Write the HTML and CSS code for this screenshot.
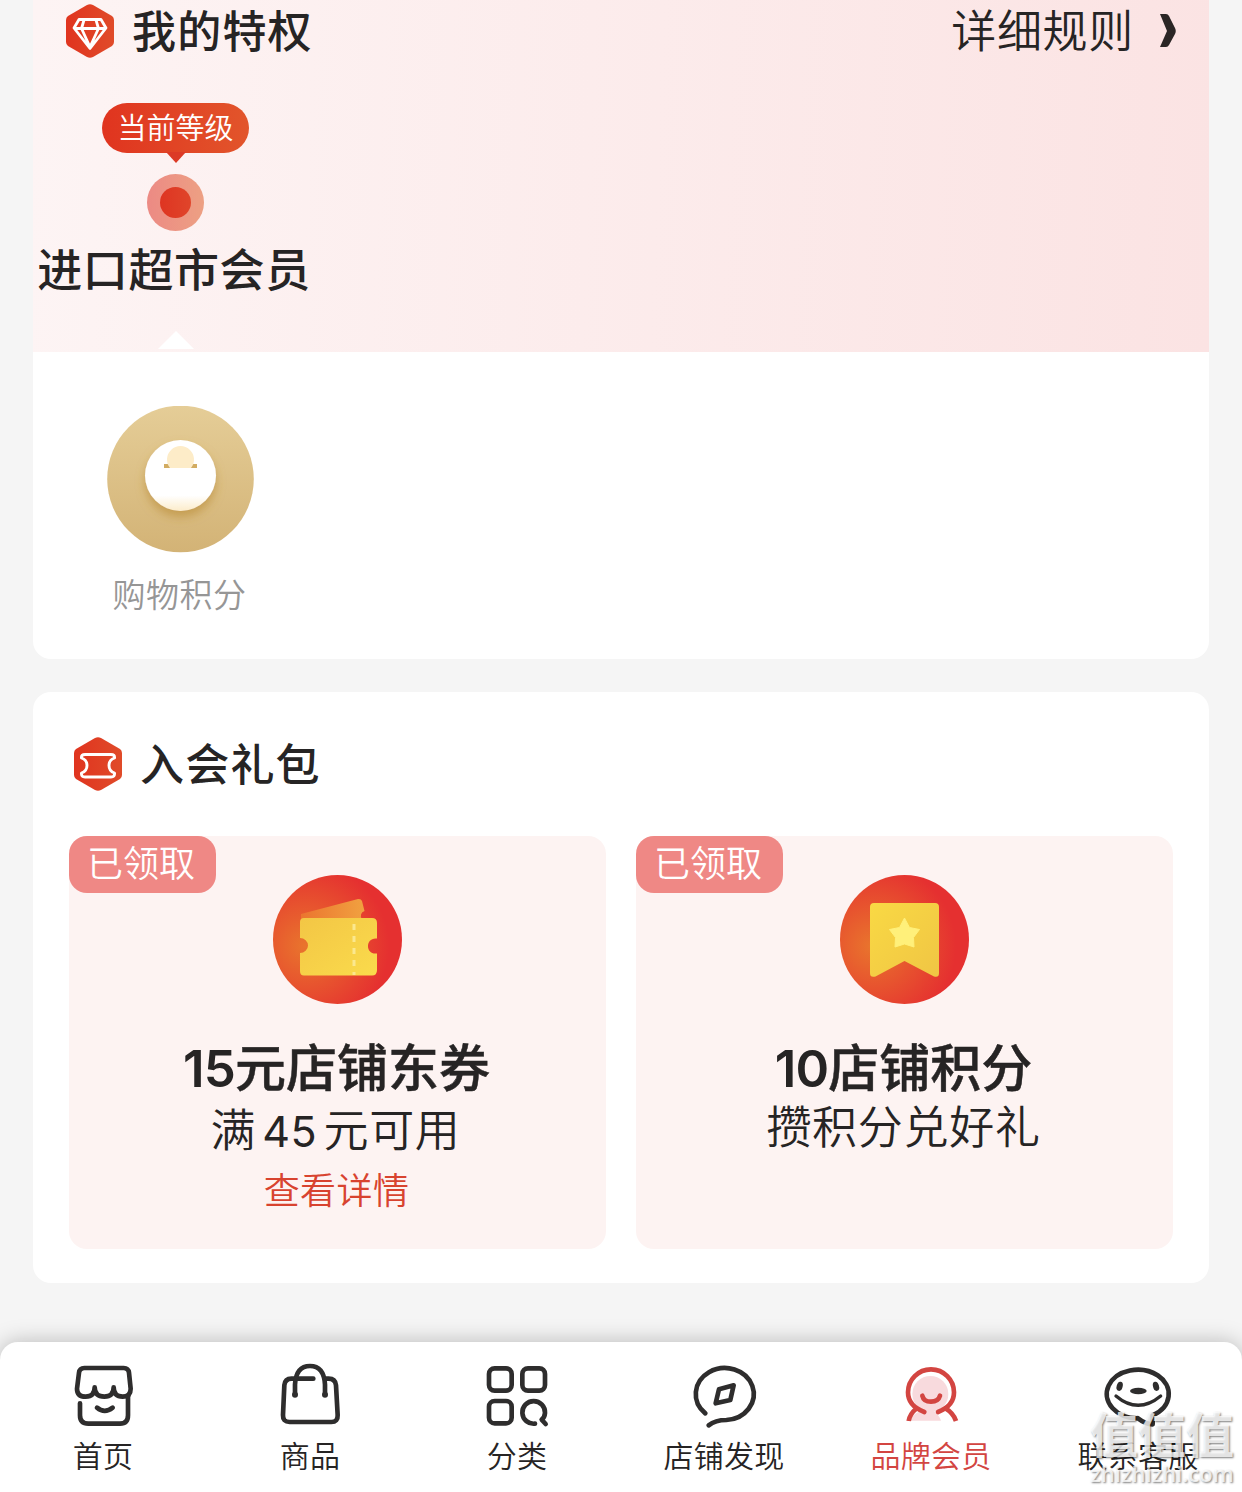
FILE: index.html
```html
<!DOCTYPE html>
<html lang="zh-CN">
<head>
    <meta charset="UTF-8">
    <meta name="viewport" content="width=device-width, initial-scale=1.0">
    <title>品牌会员</title>
    <link rel="stylesheet" href="styles.css">
</head>
<body>
    <main class="page">
        <section class="card privilege">
            <div class="privilege-top">
                <div class="title-row">
                    <svg class="hex" viewBox="0 0 48 54">
                        <defs>
                            <linearGradient id="hexFill" x1="0" x2="1">
                                <stop offset="0" stop-color="#e0341f"/>
                                <stop offset="1" stop-color="#e04b29"/>
                            </linearGradient>
                        </defs>
                        <path d="M21 1Q24-.6 27 1L46 12Q48 13.500 48 16V38Q48 40.500 46 42L27 53Q24 54.600 21 53L2 42Q0 40.500 0 38V16Q0 13.500 2 12Z" fill="url(#hexFill)"/>
                        <path d="M13 15.500H35L40 24 24 44.500 8 24ZM8 24.500H40M18 16 15.500 24.500 24 43 32.500 24.500 30 16" fill="none" stroke="#fff" stroke-width="2.800" stroke-linejoin="round"/>
                    </svg>
                    <h2>我的特权</h2>
                    <a class="rules">详细规则
                        <svg class="chevron" viewBox="0 0 16 34"><path d="M0 0H6Q8 0 9 2L15 14Q16.500 17 15 20L9 31Q8 33 6 33H0L7 17Z" fill="#2b2625"/></svg>
                    </a>
                </div>
                <div class="level">
                    <div class="level-tag">当前等级</div>
                    <div class="level-dot"></div>
                    <div class="level-name">进口超市会员</div>
                    <div class="level-arrow"></div>
                </div>
            </div>
            <div class="benefit">
                <svg class="benefit-icon" viewBox="0 0 147 147">
                    <defs>
                        <linearGradient id="gold" x1="0" x2="0" y1="0" y2="1">
                            <stop offset="0" stop-color="#e5cd97"/>
                            <stop offset="1" stop-color="#d3b376"/>
                        </linearGradient>
                        <linearGradient id="coin" x1="0" x2="0" y1="0" y2="1">
                            <stop offset=".78" stop-color="#fff"/>
                            <stop offset="1" stop-color="#fcecca"/>
                        </linearGradient>
                        <filter id="coinShadow" x="-30%" y="-30%" width="160%" height="170%">
                            <feDropShadow dx="0" dy="6" stdDeviation="5" flood-color="#b98a35" flood-opacity=".6"/>
                        </filter>
                    </defs>
                    <circle cx="73.500" cy="73" r="73.300" fill="url(#gold)"/>
                    <circle cx="73.500" cy="69.500" r="35.500" fill="url(#coin)" filter="url(#coinShadow)"/>
                    <path d="M57 58H63V62H57ZM84 58H90V62H84Z" fill="#d2ac62"/>
                    <path d="M63 62A13.500 13.500 0 1 1 84 62Z" fill="#fdecc8"/>
                </svg>
                <span>购物积分</span>
            </div>
        </section>

        <section class="card gifts">
            <div class="title-row">
                <svg class="hex" viewBox="0 0 48 54">
                    <path d="M21 1Q24-.6 27 1L46 12Q48 13.500 48 16V38Q48 40.500 46 42L27 53Q24 54.600 21 53L2 42Q0 40.500 0 38V16Q0 13.500 2 12Z" fill="url(#hexFill)"/>
                    <path d="M11 17.500H37Q41 17.500 40.500 21 35 23 35 28.500T40.500 36Q41 40 37 40H11Q7 40 7.500 36 13 34 13 28.500T7.500 21Q7 17.500 11 17.500Z" fill="none" stroke="#fff" stroke-width="2.900" stroke-linejoin="round"/>
                </svg>
                <h2>入会礼包</h2>
            </div>
            <div class="gift-list">
                <div class="gift">
                    <span class="got">已领取</span>
                    <svg class="gift-icon" viewBox="0 0 129 129">
                        <defs>
                            <radialGradient id="ball" cx=".25" cy=".55" r=".65">
                                <stop offset="0" stop-color="#e9752d"/>
                                <stop offset="1" stop-color="#e53030"/>
                            </radialGradient>
                            <linearGradient id="yellow" x1="0" x2="1" y1="0" y2="1">
                                <stop offset="0" stop-color="#f3c645"/>
                                <stop offset="1" stop-color="#fadb4c"/>
                            </linearGradient>
                            <linearGradient id="backTicket" x1="0" x2="1">
                                <stop offset="0" stop-color="#eb752f"/>
                                <stop offset="1" stop-color="#f1a140"/>
                            </linearGradient>
                            <linearGradient id="flag" x1="0" x2="1" y1="0" y2="1">
                                <stop offset="0" stop-color="#f9d944"/>
                                <stop offset="1" stop-color="#f0c544"/>
                            </linearGradient>
                        </defs>
                        <circle cx="64.500" cy="64.500" r="64.500" fill="url(#ball)"/>
                        <path d="M28 44V39L85 24Q88 23.500 89 26L91.500 36A5 5 0 0 0 89 44Z" fill="url(#backTicket)"/>
                        <path d="M31 43H99Q104 43 104 48V63.500C92 62 92 80 104 78.500V95Q104 100.500 99 100.500H31Q27 100.500 27 96V78A8 7.500 0 0 0 27 63V47Q27 43 31 43Z" fill="url(#yellow)"/>
                        <path d="M81 49V100" stroke="#fbe88e" stroke-width="3" stroke-dasharray="6 6" fill="none"/>
                    </svg>
                    <h3><span>15</span>元店铺东券</h3>
                    <p class="condition">满<span class="num">45</span>元可用</p>
                    <a class="detail">查看详情</a>
                </div>
                <div class="gift">
                    <span class="got">已领取</span>
                    <svg class="gift-icon" viewBox="0 0 129 129">
                        <circle cx="64.500" cy="64.500" r="64.500" fill="url(#ball)"/>
                        <path d="M34 28H95Q99 28 99 32V98Q99 103 94 101.500L64.500 86 35.500 101.500Q30 103 30 98V32Q30 28 34 28Z" fill="url(#flag)"/>
                        <path d="M64.500 43 69.500 52.500 79.500 54.500 73.500 62.500 74 72 64.500 69 55 72 55.500 62.500 49.500 54.500 59.500 52.500Z" fill="#fff07a" stroke="#fff07a" stroke-linejoin="round"/>
                    </svg>
                    <h3><span>10</span>店铺积分</h3>
                    <p>攒积分兑好礼</p>
                </div>
            </div>
        </section>
    </main>

    <nav class="tabbar">
        <a class="tab">
            <svg viewBox="0 0 216 216">
                <path d="M52 30H170Q184 30 186 44L191 92Q191 116 167 116Q140 116 140 88Q140 116 112 116Q83 116 83 88Q83 116 56 116Q30 116 30 92L36 44Q38 30 52 30Z"/>
                <path d="M39 136V172Q39 197 64 197H159Q183 197 183 172V114M90 149Q113 168 137 149"/>
            </svg>
            <span>首页</span>
        </a>
        <a class="tab">
            <svg viewBox="0 0 216 216">
                <path d="M118 62H52Q33 62 31 82L27 171Q26 192 47 192H172Q192 192 191 171L186 82Q184 62 164 62H156"/>
                <path d="M63 110V80Q66 24 108 24Q150 24 153 80V110"/>
                <circle class="fill" cx="63" cy="110" r="9"/>
                <circle class="fill" cx="153" cy="110" r="9"/>
            </svg>
            <span>商品</span>
        </a>
        <a class="tab">
            <svg viewBox="0 0 216 216">
                <rect x="24" y="31" width="68" height="67" rx="17"/>
                <rect x="124" y="31" width="68" height="67" rx="17"/>
                <rect x="24" y="129" width="68" height="67" rx="17"/>
                <path d="M162 197A34 34 0 1 1 192 165Q191 178 182 185L194 198"/>
            </svg>
            <span>分类</span>
        </a>
        <a class="tab">
            <svg viewBox="0 0 216 216">
                <path d="M52 166A87 78 0 1 1 115 186Q82 186 62 202"/>
                <path d="M93 94 137 82 127 126 83 136Z"/>
            </svg>
            <span>店铺发现</span>
        </a>
        <a class="tab active">
            <svg viewBox="0 0 216 216">
                <g class="tint">
                    <circle cx="106" cy="108" r="54"/>
                    <path d="M46 188Q52 166 84 156H112Q132 170 138 188Z"/>
                </g>
                <path d="M88 162Q39 144 39 103A69 69 0 0 1 177 103Q177 144 129 162M82 113Q86 131 108 131Q130 131 135 113"/>
                <path class="flat" d="M66 150Q44 168 41 189M150 150Q176 166 183 189"/>
            </svg>
            <span>品牌会员</span>
        </a>
        <a class="tab">
            <svg viewBox="0 0 216 216">
                <path d="M108 181A93 73 0 1 1 152 172V199Q130 198 108 181"/>
                <path class="thin" d="M42 114Q108 170 176 114"/>
                <ellipse class="fill" cx="53" cy="85" rx="9" ry="14" transform="rotate(15 53 85)"/>
                <ellipse class="fill" cx="162" cy="85" rx="9" ry="14" transform="rotate(-15 162 85)"/>
                <ellipse class="fill" cx="109" cy="99" rx="25" ry="10"/>
            </svg>
            <span>联系客服</span>
        </a>
        <div class="watermark">
            <b>值值值</b>
            <i>zhizhizhi.com</i>
        </div>
    </nav>
</body>
</html>
```
FILE: styles.css
```css
* {
    box-sizing: border-box;
}
body {
    margin: 0;
    height: 1492px;
    overflow: hidden;
    display: flex;
    flex-direction: column;
    background-color: #f5f5f5;
    color: #262424;
    font-family: "Noto Sans CJK SC", sans-serif;
}
h2, h3, p {
    margin: 0;
}
svg {
    display: block;
    flex: none;
}
.page {
    flex: 1;
    padding: 0 33px;
}
.card {
    background-color: #fff;
    border-radius: 18px;
}

/* privileges */
.privilege {
    height: 659px;
    border-top-left-radius: 0;
    border-top-right-radius: 0;
}
.privilege-top {
    height: 352px;
    margin-bottom: 54px;
    background: linear-gradient(92deg, #fdf4f4, #fbe3e3);
}
.title-row {
    display: flex;
    align-items: center;
    height: 54px;
}
.privilege .title-row {
    padding: 0 33px;
    height: 62px;
}
.hex {
    width: 48px;
    height: 54px;
}
h2 {
    margin-left: 18px;
    padding-bottom: 5px;
    font-size: 44px;
    font-weight: 500;
    line-height: 54px;
    letter-spacing: 1.2px;
}
.rules {
    display: flex;
    align-items: center;
    gap: 26px;
    margin: 0 0 4px auto;
    font-size: 45px;
    font-weight: 350;
    line-height: 56px;
    letter-spacing: 0.7px;
}
.chevron {
    width: 16px;
    height: 34px;
    margin-top: 4px;
}
.level {
    display: flex;
    flex-direction: column;
    align-items: center;
    width: 285px;
    padding-top: 41px;
}
.level-tag {
    position: relative;
    width: 147px;
    height: 50px;
    border-radius: 25px;
    background: linear-gradient(90deg, #e0341f, #e2552b);
    color: #fff;
    font-size: 29px;
    font-weight: 350;
    line-height: 47px;
    text-align: center;
}
.level-tag::after {
    content: "";
    position: absolute;
    left: 64px;
    top: 49px;
    border: 10px solid transparent;
    border-top: 11px solid #dc3a26;
    border-bottom: 0;
}
.level-dot {
    width: 57px;
    height: 57px;
    margin-top: 21px;
    border: 13px solid transparent;
    border-radius: 50%;
    background: linear-gradient(90deg, #de3522, #e0452a) padding-box, linear-gradient(90deg, #ec8a84, #eda083) border-box;
}
.level-name {
    margin: 10px 0 0 -3px;
    font-size: 45px;
    font-weight: 500;
    line-height: 54px;
    letter-spacing: 0.6px;
    white-space: nowrap;
}
.level-arrow {
    margin-top: 36px;
    border: 18px solid transparent;
    border-bottom-color: #fff;
    border-top: 0;
}
.benefit {
    display: flex;
    flex-direction: column;
    align-items: center;
    width: 147px;
    margin-left: 74px;
}
.benefit-icon {
    width: 147px;
    height: 147px;
}
.benefit span {
    margin: 20px 0 0 -2px;
    color: #969696;
    font-size: 33px;
    font-weight: 350;
    line-height: 40px;
    letter-spacing: 0.5px;
}

/* gift pack */
.gifts {
    height: 591px;
    margin-top: 33px;
    padding: 45px 36px 0;
}
.gifts .title-row {
    padding-left: 5px;
}
.gift-list {
    display: grid;
    grid-template-columns: 1fr 1fr;
    gap: 30px;
    margin-top: 45px;
}
.gift {
    position: relative;
    display: flex;
    flex-direction: column;
    align-items: center;
    height: 413px;
    padding-top: 39px;
    border-radius: 18px;
    background-color: #fdf3f2;
}
.got {
    position: absolute;
    left: 0;
    top: 0;
    width: 147px;
    height: 57px;
    padding-right: 3px;
    border-radius: 18px;
    background-color: #ef8885;
    color: #fff;
    font-size: 36px;
    font-weight: 350;
    line-height: 51px;
    text-align: center;
}
.gift-icon {
    width: 129px;
    height: 129px;
}
h3 {
    margin: 31px 0 0 -2px;
    font-size: 51px;
    font-weight: 500;
    line-height: 60px;
    -webkit-text-stroke: 0.5px #262424;
}
h3 span {
    font-family: Inter, sans-serif;
    font-weight: 600;
    letter-spacing: -0.8px;
    -webkit-text-stroke: 0;
}
.gift p {
    margin: -1px 0 0 -2px;
    font-size: 45px;
    font-weight: 350;
    line-height: 54px;
    letter-spacing: 0.7px;
}
.gift .condition {
    margin: 2px 0 0 -4px;
}
.gift .num {
    margin: 0 6px;
    font-family: Inter, sans-serif;
    font-weight: 400;
    font-size: 43px;
}
.detail {
    margin: 6px 0 0 -2px;
    color: #d8432f;
    font-size: 36px;
    font-weight: 350;
    line-height: 48px;
    letter-spacing: 0.4px;
}

/* bottom tabs */
.tabbar {
    position: relative;
    display: grid;
    grid-template-columns: repeat(6, 1fr);
    height: 150px;
    padding-top: 16px;
    border-radius: 18px 18px 0 0;
    background-color: #fff;
    box-shadow: 0 0 22px rgba(0, 0, 0, 0.25);
}
.tab {
    display: flex;
    flex-direction: column;
    align-items: center;
    padding-right: 1px;
    font-size: 30px;
    font-weight: 350;
    line-height: 40px;
    letter-spacing: 0.3px;
}
.tab svg {
    width: 72px;
    height: 72px;
    fill: none;
    stroke: #2e2d2d;
    stroke-width: 14px;
    stroke-linecap: round;
    stroke-linejoin: round;
}
.tab span {
    margin-top: 4px;
}
.tab .fill {
    fill: #2e2d2d;
    stroke: none;
}
.tab .thin {
    stroke-width: 10px;
}
.tab.active {
    color: #d34541;
}
.tab.active svg {
    stroke: #d34541;
}
.tab .tint {
    fill: #f8dadd;
    stroke: none;
}
.tab .flat {
    stroke-linecap: butt;
}
.watermark {
    position: absolute;
    right: 8px;
    bottom: 7px;
    display: flex;
    flex-direction: column;
    align-items: center;
    color: rgba(255, 255, 255, 0.8);
    text-shadow: 1px 1px 2px rgba(0, 0, 0, 0.5);
}
.watermark b {
    font-size: 48px;
    font-weight: 700;
    line-height: 58px;
}
.watermark i {
    font-family: "Open Sans", sans-serif;
    font-size: 22px;
    font-style: normal;
    font-weight: 600;
    line-height: 24px;
}
```
